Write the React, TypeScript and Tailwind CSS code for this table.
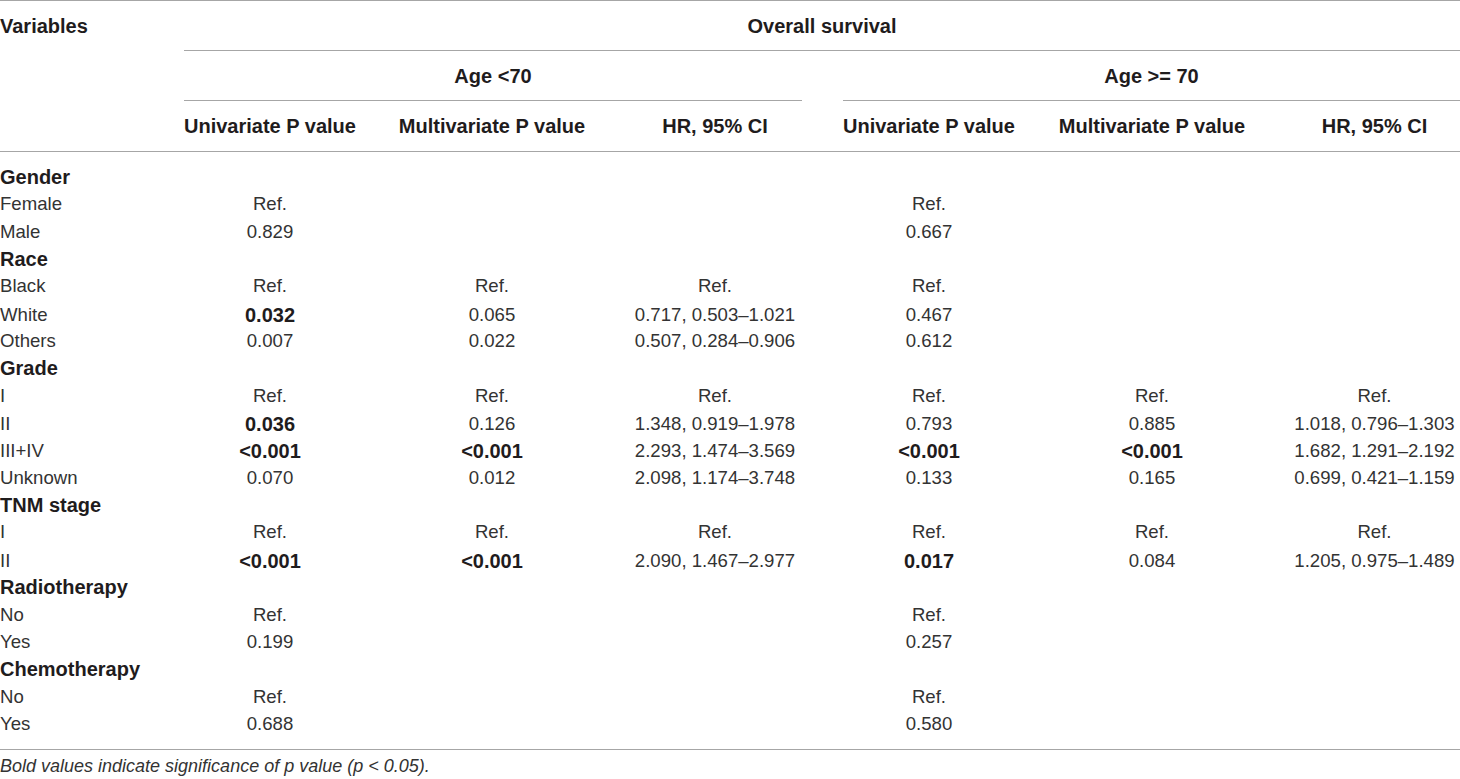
import React from "react";

type Val = string | { b: string };

type Row =
  | { group: string }
  | { label: string; cells: Val[] };

const rows: Row[] = [
  { group: "Gender" },
  { label: "Female", cells: ["Ref.", "", "", "Ref.", "", ""] },
  { label: "Male", cells: ["0.829", "", "", "0.667", "", ""] },
  { group: "Race" },
  { label: "Black", cells: ["Ref.", "Ref.", "Ref.", "Ref.", "", ""] },
  { label: "White", cells: [{ b: "0.032" }, "0.065", "0.717, 0.503–1.021", "0.467", "", ""] },
  { label: "Others", cells: ["0.007", "0.022", "0.507, 0.284–0.906", "0.612", "", ""] },
  { group: "Grade" },
  { label: "I", cells: ["Ref.", "Ref.", "Ref.", "Ref.", "Ref.", "Ref."] },
  {
    label: "II",
    cells: [{ b: "0.036" }, "0.126", "1.348, 0.919–1.978", "0.793", "0.885", "1.018, 0.796–1.303"],
  },
  {
    label: "III+IV",
    cells: [
      { b: "<0.001" },
      { b: "<0.001" },
      "2.293, 1.474–3.569",
      { b: "<0.001" },
      { b: "<0.001" },
      "1.682, 1.291–2.192",
    ],
  },
  {
    label: "Unknown",
    cells: ["0.070", "0.012", "2.098, 1.174–3.748", "0.133", "0.165", "0.699, 0.421–1.159"],
  },
  { group: "TNM stage" },
  { label: "I", cells: ["Ref.", "Ref.", "Ref.", "Ref.", "Ref.", "Ref."] },
  {
    label: "II",
    cells: [{ b: "<0.001" }, { b: "<0.001" }, "2.090, 1.467–2.977", { b: "0.017" }, "0.084", "1.205, 0.975–1.489"],
  },
  { group: "Radiotherapy" },
  { label: "No", cells: ["Ref.", "", "", "Ref.", "", ""] },
  { label: "Yes", cells: ["0.199", "", "", "0.257", "", ""] },
  { group: "Chemotherapy" },
  { label: "No", cells: ["Ref.", "", "", "Ref.", "", ""] },
  { label: "Yes", cells: ["0.688", "", "", "0.580", "", ""] },
];

const grid = "grid grid-cols-[184px_172px_272px_174px_41px_172px_274px_1fr]";

function Cell({ v }: { v: Val }) {
  if (typeof v === "string") {
    return <div className="text-center text-[18.6px] text-[#333]">{v}</div>;
  }
  return <div className="text-center text-[20px] font-bold text-[#1f1c1d]">{v.b}</div>;
}

function HeadCell({ children, className = "" }: { children?: React.ReactNode; className?: string }) {
  return (
    <div className={`flex h-[50px] items-center justify-center text-[20px] font-bold text-[#1f1c1d] ${className}`}>
      {children}
    </div>
  );
}

export default function App() {
  return (
    <div className="h-[779px] w-[1460px] overflow-hidden bg-white" style={{ fontFamily: '"Liberation Sans", Arial, sans-serif' }}>
      <div className="border-t border-[#a6a6a6]">
        {/* header row 1 */}
        <div className={grid}>
          <HeadCell className="justify-start">Variables</HeadCell>
          <HeadCell className="col-span-7 border-b border-[#a6a6a6]">Overall survival</HeadCell>
        </div>
        {/* header row 2 */}
        <div className={grid}>
          <div />
          <HeadCell className="col-span-3 border-b border-[#a6a6a6]">Age &lt;70</HeadCell>
          <div />
          <HeadCell className="col-span-3 border-b border-[#a6a6a6]">Age &gt;= 70</HeadCell>
        </div>
        {/* header row 3 */}
        <div className={`${grid} border-b border-[#a6a6a6]`}>
          <div />
          <HeadCell>Univariate P value</HeadCell>
          <HeadCell>Multivariate P value</HeadCell>
          <HeadCell>HR, 95% CI</HeadCell>
          <div />
          <HeadCell>Univariate P value</HeadCell>
          <HeadCell>Multivariate P value</HeadCell>
          <HeadCell>HR, 95% CI</HeadCell>
        </div>
      </div>

      <div className="border-b border-[#a6a6a6] pb-[12px] pt-[11px]">
        {rows.map((r, i) =>
          "group" in r ? (
            <div key={i} className="flex h-[27.35px] items-center text-[20px] font-bold text-[#1f1c1d]">
              {r.group}
            </div>
          ) : (
            <div key={i} className={`${grid} h-[27.35px] items-center`}>
              <div className="text-[18.6px] text-[#333]">{r.label}</div>
              <Cell v={r.cells[0]} />
              <Cell v={r.cells[1]} />
              <Cell v={r.cells[2]} />
              <div />
              <Cell v={r.cells[3]} />
              <Cell v={r.cells[4]} />
              <Cell v={r.cells[5]} />
            </div>
          )
        )}
      </div>

      <div className="pt-[3px] text-[18px] italic text-[#333]">
        Bold values indicate significance of p value (p &lt; 0.05).
      </div>
    </div>
  );
}
